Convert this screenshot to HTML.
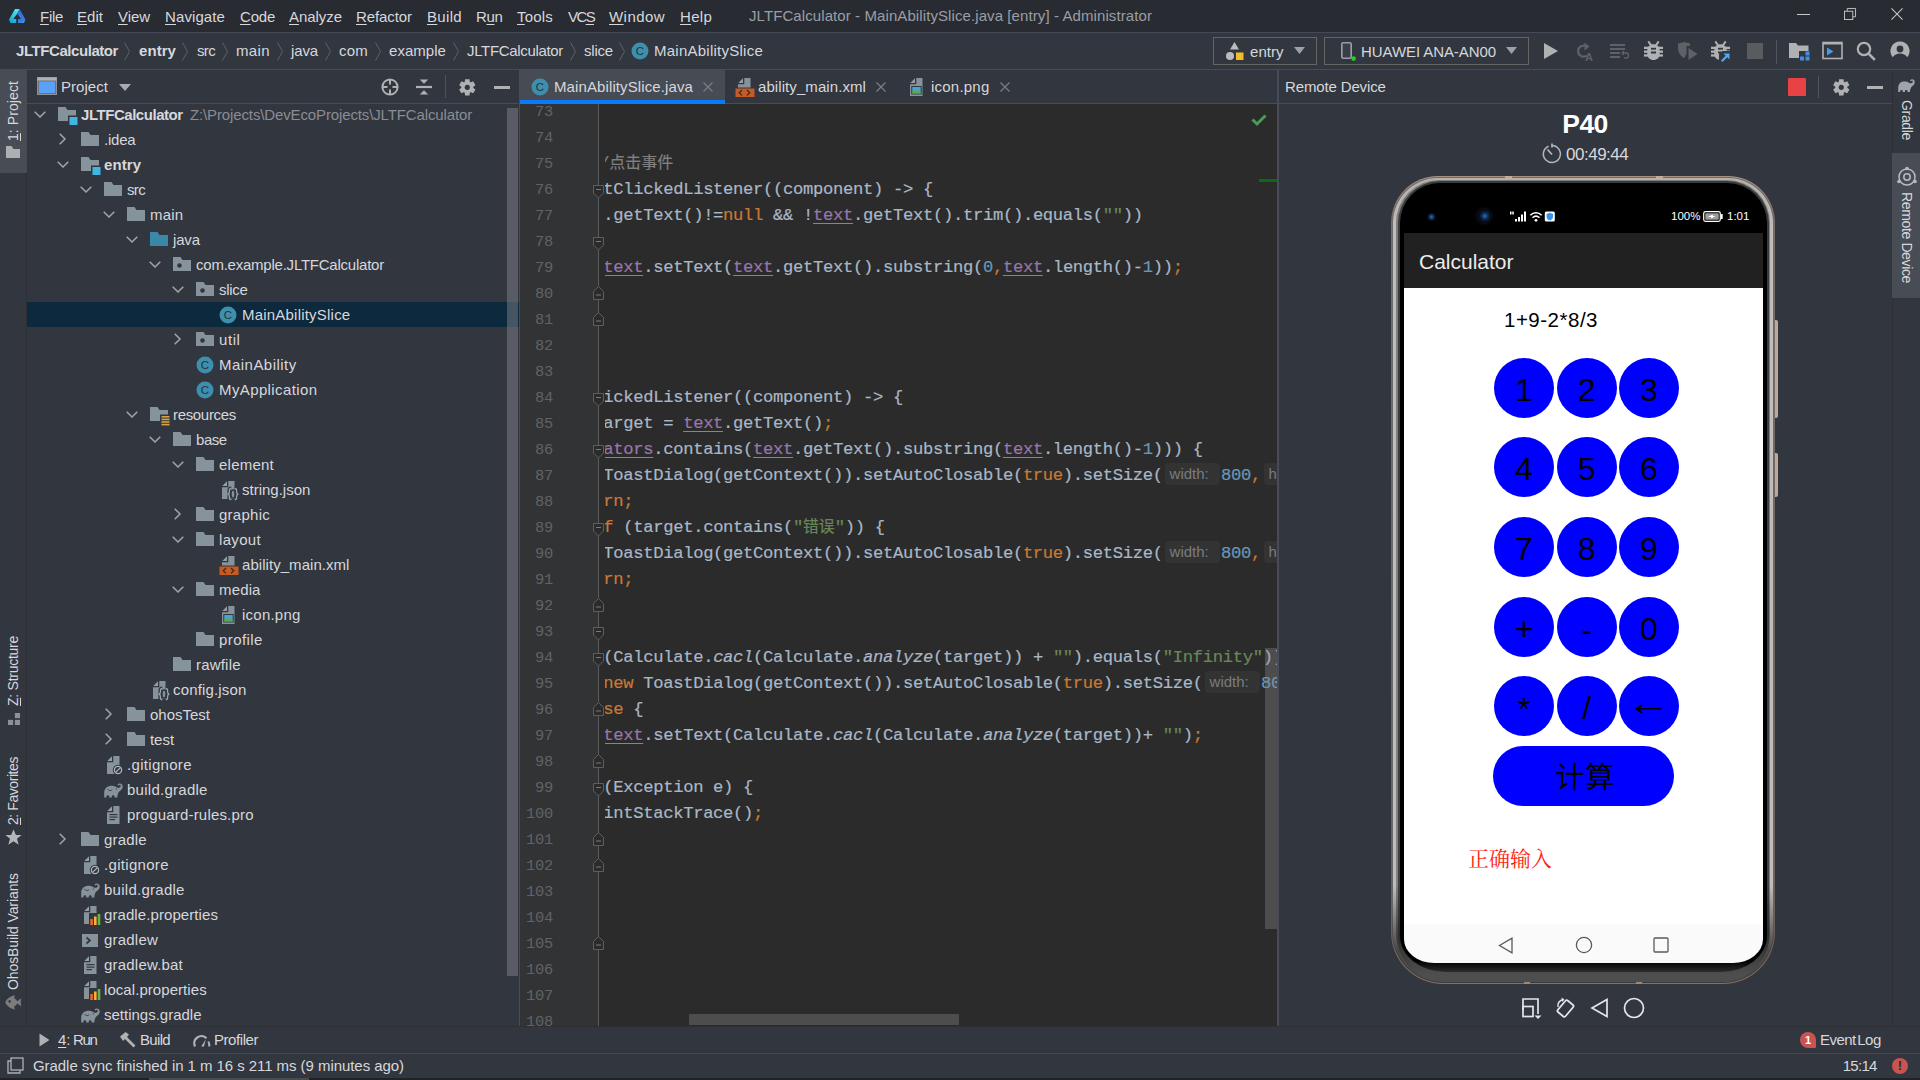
<!DOCTYPE html><html lang="en"><head><meta charset="utf-8"><title>JLTFCalculator - MainAbilitySlice.java</title><style>
*{margin:0;padding:0;box-sizing:border-box}
html,body{width:1920px;height:1080px;overflow:hidden;background:#32363f;}
body{position:relative;font-family:"Liberation Sans","Noto Sans CJK SC",sans-serif;font-size:15px;color:#d6d8dc;}
.a{position:absolute}
.t{position:absolute;white-space:pre;line-height:20px;height:20px}
.b{font-weight:bold}
u.m{text-decoration:underline;text-underline-offset:2px}
svg{position:absolute;overflow:visible}
.code{position:absolute;left:-1.8px;white-space:pre;font-family:"Liberation Mono","Noto Sans CJK SC",monospace;font-size:17.2px;letter-spacing:-0.322px;line-height:26px;height:26px;color:#a9b7c6;-webkit-text-stroke:0.2px}
.ln{position:absolute;right:0;font-family:"Liberation Mono","Noto Sans CJK SC",monospace;font-size:15.4px;letter-spacing:-0.24px;line-height:26px;height:26px;color:#606366;text-align:right}
.k{color:#cc7832} .s{color:#6a8759} .n{color:#6897bb} .f{color:#9876aa;text-decoration:underline;text-underline-offset:3px} .i{font-style:italic} .c{color:#808080}
.hint{display:inline-block;font-family:"Liberation Sans","Noto Sans CJK SC",sans-serif;font-size:15px;letter-spacing:0;-webkit-text-stroke:0;color:#7a7c7f;background:#333333;border-radius:4px;height:22px;line-height:22px;padding:0 5px;vertical-align:top;margin:0 1px 0 1px;overflow:hidden}
</style></head><body>
<div class="a" style="left:0px;top:0px;width:1920px;height:32px;background:#282b32;"></div>
<div class="a" style="left:0px;top:32px;width:1920px;height:1px;background:#454a56;"></div>
<div class="a" style="left:0px;top:69px;width:1920px;height:1px;background:#474c58;"></div>
<svg style="left:8.800px;top:8.800px" width="17" height="15" viewBox="0 0 17 15"><defs><linearGradient id="lg1" x1="0.600" y1="0" x2="0.200" y2="1"><stop offset="0" stop-color="#4fe6ee"/><stop offset="1" stop-color="#18a0d6"/></linearGradient><linearGradient id="lg2" x1="0.300" y1="0" x2="0.600" y2="1"><stop offset="0" stop-color="#2f6fd8"/><stop offset="0.800" stop-color="#3d78e0"/><stop offset="1" stop-color="#2f9be8"/></linearGradient></defs><path d="M6 0H10.600L8.200 4.800L4.300 9.900H7.200V14H1.400L0 10.600Z" fill="url(#lg1)"/><path d="M10.600 0L16.400 10.600L15 14H8.900V9.900H12L8.200 4.800Z" fill="url(#lg2)"/></svg>
<div class="t " style="left:40px;top:7px;letter-spacing:-0.293px;"><u class="m">F</u>ile</div>
<div class="t " style="left:77px;top:7px;letter-spacing:0.038px;"><u class="m">E</u>dit</div>
<div class="t " style="left:118px;top:7px;letter-spacing:-0.06px;"><u class="m">V</u>iew</div>
<div class="t " style="left:165px;top:7px;letter-spacing:0.1px;"><u class="m">N</u>avigate</div>
<div class="t " style="left:240px;top:7px;letter-spacing:-0.215px;"><u class="m">C</u>ode</div>
<div class="t " style="left:289px;top:7px;letter-spacing:-0.052px;"><u class="m">A</u>nalyze</div>
<div class="t " style="left:356px;top:7px;letter-spacing:-0.086px;"><u class="m">R</u>efactor</div>
<div class="t " style="left:427px;top:7px;letter-spacing:0.329px;"><u class="m">B</u>uild</div>
<div class="t " style="left:476px;top:7px;letter-spacing:-0.339px;">R<u class="m">u</u>n</div>
<div class="t " style="left:517px;top:7px;letter-spacing:0.197px;"><u class="m">T</u>ools</div>
<div class="t " style="left:568px;top:7px;letter-spacing:-1.614px;">VC<u class="m">S</u></div>
<div class="t " style="left:609px;top:7px;letter-spacing:0.442px;"><u class="m">W</u>indow</div>
<div class="t " style="left:680px;top:7px;letter-spacing:0.288px;"><u class="m">H</u>elp</div>
<div class="t " style="left:749px;top:6px;letter-spacing:0.091px;color:#9b9ea4">JLTFCalculator - MainAbilitySlice.java [entry] - Administrator</div>
<div class="a" style="left:1797px;top:14px;width:13px;height:1px;background:#c8c9cc;"></div>
<svg style="left:1844px;top:8px" width="12" height="12" viewBox="0 0 13 13" fill="none" stroke="#c8c9cc" stroke-width="1"><rect x="0.5" y="3.5" width="9" height="9"/><path d="M3.5 3.5V0.5H12.5V9.5H9.5"/></svg>
<svg style="left:1891px;top:8px" width="12" height="12" viewBox="0 0 14 14" fill="none" stroke="#c8c9cc" stroke-width="1.2"><path d="M0.5 0.5L13.5 13.5M13.5 0.5L0.5 13.5"/></svg>
<div class="t b" style="left:16px;top:41px;letter-spacing:-0.434px;">JLTFCalculator</div>
<div class="t b" style="left:139px;top:41px;letter-spacing:0.064px;">entry</div>
<div class="t " style="left:197px;top:41px;letter-spacing:-0.665px;">src</div>
<div class="t " style="left:236px;top:41px;letter-spacing:0.372px;">main</div>
<div class="t " style="left:291px;top:41px;letter-spacing:-0.129px;">java</div>
<div class="t " style="left:339px;top:41px;letter-spacing:0.221px;">com</div>
<div class="t " style="left:389px;top:41px;letter-spacing:0.043px;">example</div>
<div class="t " style="left:467px;top:41px;letter-spacing:-0.327px;">JLTFCalculator</div>
<div class="t " style="left:584px;top:41px;letter-spacing:-0.202px;">slice</div>
<svg style="left:123px;top:42px" width="8" height="19" viewBox="0 0 8 19" fill="none" stroke="#5d616a" stroke-width="1"><path d="M1.5 0.5L6.5 9.5L1.5 18.5"/></svg>
<svg style="left:181px;top:42px" width="8" height="19" viewBox="0 0 8 19" fill="none" stroke="#5d616a" stroke-width="1"><path d="M1.5 0.5L6.5 9.5L1.5 18.5"/></svg>
<svg style="left:221px;top:42px" width="8" height="19" viewBox="0 0 8 19" fill="none" stroke="#5d616a" stroke-width="1"><path d="M1.5 0.5L6.5 9.5L1.5 18.5"/></svg>
<svg style="left:276px;top:42px" width="8" height="19" viewBox="0 0 8 19" fill="none" stroke="#5d616a" stroke-width="1"><path d="M1.5 0.5L6.5 9.5L1.5 18.5"/></svg>
<svg style="left:324px;top:42px" width="8" height="19" viewBox="0 0 8 19" fill="none" stroke="#5d616a" stroke-width="1"><path d="M1.5 0.5L6.5 9.5L1.5 18.5"/></svg>
<svg style="left:374px;top:42px" width="8" height="19" viewBox="0 0 8 19" fill="none" stroke="#5d616a" stroke-width="1"><path d="M1.5 0.5L6.5 9.5L1.5 18.5"/></svg>
<svg style="left:452px;top:42px" width="8" height="19" viewBox="0 0 8 19" fill="none" stroke="#5d616a" stroke-width="1"><path d="M1.5 0.5L6.5 9.5L1.5 18.5"/></svg>
<svg style="left:569px;top:42px" width="8" height="19" viewBox="0 0 8 19" fill="none" stroke="#5d616a" stroke-width="1"><path d="M1.5 0.5L6.5 9.5L1.5 18.5"/></svg>
<svg style="left:618px;top:42px" width="8" height="19" viewBox="0 0 8 19" fill="none" stroke="#5d616a" stroke-width="1"><path d="M1.5 0.5L6.5 9.5L1.5 18.5"/></svg>
<svg style="left:631px;top:42px" width="18" height="18" viewBox="0 0 18 18"><circle cx="9" cy="9" r="8.5" fill="#3d8fad"/><text x="9" y="13.2" text-anchor="middle" font-family="Liberation Sans,sans-serif" font-size="11.5" fill="#26323b">C</text></svg>
<div class="t " style="left:654px;top:41px;letter-spacing:0.248px;">MainAbilitySlice</div>
<div class="a" style="left:1213px;top:37px;width:104px;height:28px;border:1px solid #646464"></div>
<div class="a" style="left:1324px;top:37px;width:205px;height:28px;border:1px solid #646464"></div>
<svg style="left:1225px;top:41px" width="20" height="20" viewBox="0 0 20 20"><path d="M9.5 1L14 8.5H5Z" fill="#b9bbbe"/><circle cx="5" cy="15" r="4" fill="#b9bbbe"/><rect x="11" y="11.5" width="7.5" height="7.5" fill="#f2bd2b"/></svg>
<div class="t " style="left:1250px;top:42px;letter-spacing:0.051px;">entry</div>
<svg style="left:1294px;top:47px" width="11" height="7" viewBox="0 0 11 7"><path d="M0 0H11L5.5 7Z" fill="#9da0a6"/></svg>
<svg style="left:1340px;top:41px" width="16" height="20" viewBox="0 0 16 20"><rect x="1.8" y="1.8" width="9.4" height="15.4" rx="1.5" fill="#3a3e47" stroke="#9aa0a8" stroke-width="1.6"/><circle cx="13.6" cy="17.6" r="2.3" fill="#1fd41f"/></svg>
<div class="t " style="left:1361px;top:42px;letter-spacing:-0.076px;">HUAWEI ANA-AN00</div>
<svg style="left:1506px;top:47px" width="11" height="7" viewBox="0 0 11 7"><path d="M0 0H11L5.5 7Z" fill="#9da0a6"/></svg>
<svg style="left:1543px;top:42px" width="16" height="18" viewBox="0 0 16 18"><path d="M1 1L15 9L1 17Z" fill="#afb1b3"/></svg>
<svg style="left:1575px;top:41px" width="20" height="20" viewBox="0 0 20 20" fill="none" stroke="#5e6166" stroke-width="2.2"><path d="M12 14.5A5.5 5.5 0 1 1 10.5 5"/><path d="M9.5 1.5L14.5 5.5L9.5 9.5Z" fill="#5e6166" stroke="none"/><text x="10" y="19.500" font-size="11" font-weight="bold" font-family="Liberation Sans,sans-serif" fill="#5e6166" stroke="none">A</text></svg>
<svg style="left:1610px;top:43px" width="20" height="17" viewBox="0 0 20 17" fill="#5e6166"><rect x="0" y="1" width="15" height="2"/><rect x="0" y="5" width="15" height="2"/><rect x="0" y="9" width="10" height="2"/><rect x="0" y="13" width="10" height="2"/><path d="M12 10h4a2.5 2.5 0 0 1 0 5h-2" fill="none" stroke="#5e6166" stroke-width="1.3"/><path d="M14 7.5L11 10L14 12.5Z"/></svg>
<svg style="left:1644px;top:41px" width="19" height="19" viewBox="0 0 19 19" fill="#afb1b3"><path d="M4.300 0.400L7.200 4.600M14.700 0.400L11.800 4.600" stroke="#afb1b3" stroke-width="1.900" fill="none"/><path d="M9.500 3.200c3.600 0 6.200 2.400 6.200 6v4c0 3.400-2.800 5.800-6.200 5.800s-6.200-2.400-6.200-5.800v-4c0-3.600 2.600-6 6.200-6z"/><rect x="0" y="5.700" width="19" height="2.300"/><rect x="0" y="9.500" width="19" height="2.300"/><rect x="0" y="13.300" width="19" height="2.300"/><rect x="7" y="6.800" width="5" height="1.800" fill="#32363f"/><rect x="7" y="10.500" width="5" height="2" fill="#32363f"/></svg>
<svg style="left:1677px;top:41px" width="22" height="20" viewBox="0 0 22 20" fill="#5e6166"><path d="M1 2.500L7.500 1L13 2.500V5H9.500V12.500L7.500 17C3.500 15 1 11.500 1 7Z"/><path d="M11.500 7L20.500 13L11.500 19Z"/></svg>
<svg style="left:1711px;top:41px" width="19" height="19" viewBox="0 0 19 19" fill="#afb1b3"><path d="M4.300 0.400L7.200 4.600M14.700 0.400L11.800 4.600" stroke="#afb1b3" stroke-width="1.900" fill="none"/><path d="M9.500 3.200c3.600 0 6.200 2.400 6.200 6v4c0 3.400-2.800 5.800-6.200 5.800s-6.200-2.400-6.200-5.800v-4c0-3.600 2.600-6 6.200-6z"/><rect x="0" y="5.700" width="19" height="2.300"/><rect x="0" y="9.500" width="19" height="2.300"/><rect x="0" y="13.300" width="19" height="2.300"/><rect x="7" y="6.800" width="5" height="1.800" fill="#32363f"/><rect x="7" y="10.500" width="5" height="2" fill="#32363f"/></svg>
<svg style="left:1719px;top:51px" width="12" height="12" viewBox="0 0 12 12"><path d="M0 12V3L4 0H12V12Z" fill="#32363f"/><path d="M4.500 2.500H10.500V8.500L8.300 6.300L3.600 11L2 9.400L6.700 4.700Z" fill="#4aa8ff"/></svg>
<div class="a" style="left:1747px;top:43px;width:16px;height:16px;background:#595b5f;"></div>
<div class="a" style="left:1776px;top:40px;width:1px;height:24px;background:#50545c;"></div>
<svg style="left:1788px;top:41px" width="22" height="20" viewBox="0 0 22 20"><path d="M1 2H8L10 4.500H20.500V17H1Z" fill="#afb1b3"/><rect x="11" y="10" width="11" height="10" fill="#32363f"/><rect x="12" y="15.500" width="4" height="4" fill="#3d8fe8"/><rect x="17.500" y="15.500" width="4" height="4" fill="#3d8fe8"/><rect x="17.500" y="10.500" width="4" height="4" fill="#3d8fe8"/></svg>
<svg style="left:1822px;top:41px" width="21" height="19" viewBox="0 0 21 19"><rect x="1" y="1.500" width="19" height="16" fill="none" stroke="#afb1b3" stroke-width="1.600"/><rect x="1" y="1" width="19" height="2.500" fill="#afb1b3"/><path d="M5 6.500L11.500 10.500L5 14.500Z" fill="#3d9cf0"/></svg>
<svg style="left:1856px;top:41px" width="20" height="20" viewBox="0 0 20 20" fill="none" stroke="#afb1b3" stroke-width="2.200"><circle cx="8" cy="8" r="6.200"/><path d="M12.600 12.600L18.800 18.800" stroke-width="2.600"/></svg>
<svg style="left:1890px;top:41px" width="20" height="20" viewBox="0 0 20 20"><path d="M10 0.500A9.500 9.500 0 0 1 17.200 16.200C15.600 13.800 13 12.600 10 12.600S4.400 13.800 2.800 16.200A9.500 9.500 0 0 1 10 0.500Z" fill="#afb1b3"/><circle cx="10" cy="8" r="3.400" fill="#32363f"/></svg>
<div class="a" style="left:26px;top:70px;width:1px;height:957px;background:#2d2f34;"></div>
<div class="a" style="left:0px;top:70px;width:27px;height:103px;background:#484c55;"></div>
<div class="t" style="left:13px;top:140.5px;transform-origin:0 0;transform:rotate(-90deg) translate(0,-10px);font-size:14px;letter-spacing:0.086px;"><u class="m">1</u>: Project</div>
<div class="t" style="left:13px;top:706px;transform-origin:0 0;transform:rotate(-90deg) translate(0,-10px);font-size:14px;letter-spacing:-0.261px;"><u class="m">Z</u>: Structure</div>
<div class="t" style="left:13px;top:825px;transform-origin:0 0;transform:rotate(-90deg) translate(0,-10px);font-size:14px;letter-spacing:-0.428px;"><u class="m">2</u>: Favorites</div>
<div class="t" style="left:13px;top:990px;transform-origin:0 0;transform:rotate(-90deg) translate(0,-10px);font-size:14px;letter-spacing:-0.1px;">OhosBuild Variants</div>
<svg style="left:6px;top:146px" width="14" height="12" viewBox="0 0 14 12"><path d="M0 0H5.500L7.500 3H14V12H0Z" fill="#adafb2"/></svg>
<svg style="left:7.500px;top:712.500px" width="12" height="12" viewBox="0 0 14 14" fill="#8d9095"><rect x="8" y="0" width="6" height="6"/><rect x="0" y="8" width="6" height="6"/><rect x="8" y="8" width="6" height="6"/></svg>
<svg style="left:5px;top:829px" width="17" height="17" viewBox="0 0 17 17"><path d="M8.500 0.500L10.900 6H16.500L12 9.700L13.700 15.800L8.500 12.200L3.300 15.800L5 9.700L0.500 6H6.100Z" fill="#b4b6b9"/></svg>
<svg style="left:4.500px;top:994.500px" width="17" height="15" viewBox="0 0 17 15"><path d="M0.300 7C2 3.500 5 1 9.800 0.200L9.200 3.200C10.600 4 11.600 5 12.300 6.200L16.300 3.200C15.600 5.800 15.600 9 16.300 11.600L12.300 8.600C11.600 9.800 10.600 10.800 9.200 11.600L9.800 14.600C5 13.800 2 11 0.300 7.800Z" fill="#7c7c7c"/><ellipse cx="4.600" cy="6.500" rx="1.100" ry="1.400" fill="#32363f"/></svg>
<svg style="left:37px;top:77px" width="20" height="18" viewBox="0 0 20 18"><rect x="0.500" y="0.500" width="19" height="17" fill="#6e7279" stroke="#8d9096"/><rect x="0.500" y="0.500" width="19" height="3" fill="#aeb0b4"/><rect x="2" y="4.500" width="16" height="11.500" fill="#5aa2f7"/></svg>
<div class="t " style="left:61px;top:77px;letter-spacing:0.045px;">Project</div>
<svg style="left:119px;top:84px" width="12" height="7" viewBox="0 0 12 7"><path d="M0 0H12L6 7Z" fill="#a9abaf"/></svg>
<svg style="left:381px;top:78px" width="18" height="18" viewBox="0 0 18 18" fill="none" stroke="#afb1b3" stroke-width="2"><circle cx="9" cy="9" r="7.600"/><path d="M9 1V6.500M9 11.500V17M1 9H6.500M11.500 9H17" stroke-width="2"/></svg>
<svg style="left:416px;top:78px" width="16" height="18" viewBox="0 0 16 18" fill="#afb1b3"><rect x="0" y="7.900" width="16" height="2.200"/><path d="M8 5.800L3.800 1.400H12.200Z"/><path d="M8 12.200L3.800 16.600H12.200Z"/></svg>
<div class="a" style="left:445px;top:75px;width:1px;height:23px;background:#55524e;"></div>
<svg style="left:458.7px;top:78.7px" width="16.600" height="16.600" viewBox="-9 -9 18 18"><g fill="#afb1b3"><path d="M-2.400 -8.800H2.400L3 -4H-3Z" transform="rotate(0)"/><path d="M-2.400 -8.800H2.400L3 -4H-3Z" transform="rotate(60)"/><path d="M-2.400 -8.800H2.400L3 -4H-3Z" transform="rotate(120)"/><path d="M-2.400 -8.800H2.400L3 -4H-3Z" transform="rotate(180)"/><path d="M-2.400 -8.800H2.400L3 -4H-3Z" transform="rotate(240)"/><path d="M-2.400 -8.800H2.400L3 -4H-3Z" transform="rotate(300)"/><circle r="6.400"/></g><circle r="2.800" fill="#32363f"/></svg>
<div class="a" style="left:494px;top:86px;width:16px;height:2.5px;background:#afb1b3;"></div>
<div class="a" style="left:27px;top:103px;width:492px;height:1px;background:#474c58;"></div>
<svg style="left:34px;top:111px" width="12" height="7" viewBox="0 0 12 7" fill="none" stroke="#a2a5ab" stroke-width="1.500"><path d="M0.700 0.700L6 6L11.300 0.700"/></svg>
<svg style="left:58px;top:107px" width="20" height="19" viewBox="0 0 20 19"><path d="M0 0H7.500L9.500 3H18V14H0Z" fill="#87939a"/><rect x="10" y="8.500" width="10" height="10" fill="#32363f"/><rect x="11.500" y="10" width="8" height="8" fill="#40b6e0"/></svg>
<div class="t b" style="left:81px;top:105px;letter-spacing:-0.455px;">JLTFCalculator</div>
<svg style="left:59px;top:133px" width="7" height="12" viewBox="0 0 7 12" fill="none" stroke="#a2a5ab" stroke-width="1.500"><path d="M0.700 0.700L6 6L0.700 11.300"/></svg>
<svg style="left:81px;top:132px" width="20" height="19" viewBox="0 0 20 19"><path d="M0 0H7.500L9.500 3H18V14H0Z" fill="#87939a"/></svg>
<div class="t " style="left:104px;top:130px;letter-spacing:-0.225px;">.idea</div>
<svg style="left:57px;top:161px" width="12" height="7" viewBox="0 0 12 7" fill="none" stroke="#a2a5ab" stroke-width="1.500"><path d="M0.700 0.700L6 6L11.300 0.700"/></svg>
<svg style="left:81px;top:157px" width="20" height="19" viewBox="0 0 20 19"><path d="M0 0H7.500L9.500 3H18V14H0Z" fill="#87939a"/><rect x="10" y="8.500" width="10" height="10" fill="#32363f"/><rect x="11.500" y="10" width="8" height="8" fill="#40b6e0"/></svg>
<div class="t b" style="left:104px;top:155px;letter-spacing:0.124px;">entry</div>
<svg style="left:80px;top:186px" width="12" height="7" viewBox="0 0 12 7" fill="none" stroke="#a2a5ab" stroke-width="1.500"><path d="M0.700 0.700L6 6L11.300 0.700"/></svg>
<svg style="left:104px;top:182px" width="20" height="19" viewBox="0 0 20 19"><path d="M0 0H7.500L9.500 3H18V14H0Z" fill="#87939a"/></svg>
<div class="t " style="left:127px;top:180px;letter-spacing:-0.665px;">src</div>
<svg style="left:103px;top:211px" width="12" height="7" viewBox="0 0 12 7" fill="none" stroke="#a2a5ab" stroke-width="1.500"><path d="M0.700 0.700L6 6L11.300 0.700"/></svg>
<svg style="left:127px;top:207px" width="20" height="19" viewBox="0 0 20 19"><path d="M0 0H7.500L9.500 3H18V14H0Z" fill="#87939a"/></svg>
<div class="t " style="left:150px;top:205px;letter-spacing:0.197px;">main</div>
<svg style="left:126px;top:236px" width="12" height="7" viewBox="0 0 12 7" fill="none" stroke="#a2a5ab" stroke-width="1.500"><path d="M0.700 0.700L6 6L11.300 0.700"/></svg>
<svg style="left:150px;top:232px" width="20" height="19" viewBox="0 0 20 19"><path d="M0 0H7.500L9.500 3H18V14H0Z" fill="#3a87a8"/></svg>
<div class="t " style="left:173px;top:230px;letter-spacing:-0.154px;">java</div>
<svg style="left:149px;top:261px" width="12" height="7" viewBox="0 0 12 7" fill="none" stroke="#a2a5ab" stroke-width="1.500"><path d="M0.700 0.700L6 6L11.300 0.700"/></svg>
<svg style="left:173px;top:257px" width="20" height="19" viewBox="0 0 20 19"><path d="M0 0H7.500L9.500 3H18V14H0Z" fill="#87939a"/><circle cx="6.500" cy="8.500" r="2.300" fill="#32363f"/></svg>
<div class="t " style="left:196px;top:255px;letter-spacing:-0.229px;">com.example.JLTFCalculator</div>
<svg style="left:172px;top:286px" width="12" height="7" viewBox="0 0 12 7" fill="none" stroke="#a2a5ab" stroke-width="1.500"><path d="M0.700 0.700L6 6L11.300 0.700"/></svg>
<svg style="left:196px;top:282px" width="20" height="19" viewBox="0 0 20 19"><path d="M0 0H7.500L9.500 3H18V14H0Z" fill="#87939a"/><circle cx="6.500" cy="8.500" r="2.300" fill="#32363f"/></svg>
<div class="t " style="left:219px;top:280px;letter-spacing:-0.302px;">slice</div>
<div class="a" style="left:27px;top:302px;width:492px;height:25px;background:#0d293e;"></div>
<svg style="left:219px;top:306px" width="18" height="18" viewBox="0 0 18 18"><circle cx="9" cy="9" r="8.5" fill="#3d8fad"/><text x="9" y="13.2" text-anchor="middle" font-family="Liberation Sans,sans-serif" font-size="11.5" fill="#26323b">C</text></svg>
<div class="t " style="left:242px;top:305px;letter-spacing:0.21px;">MainAbilitySlice</div>
<svg style="left:174px;top:333px" width="7" height="12" viewBox="0 0 7 12" fill="none" stroke="#a2a5ab" stroke-width="1.500"><path d="M0.700 0.700L6 6L0.700 11.300"/></svg>
<svg style="left:196px;top:332px" width="20" height="19" viewBox="0 0 20 19"><path d="M0 0H7.500L9.500 3H18V14H0Z" fill="#87939a"/><circle cx="6.500" cy="8.500" r="2.300" fill="#32363f"/></svg>
<div class="t " style="left:219px;top:330px;letter-spacing:0.581px;">util</div>
<svg style="left:196px;top:356px" width="18" height="18" viewBox="0 0 18 18"><circle cx="9" cy="9" r="8.5" fill="#3d8fad"/><text x="9" y="13.2" text-anchor="middle" font-family="Liberation Sans,sans-serif" font-size="11.5" fill="#26323b">C</text></svg>
<div class="t " style="left:219px;top:355px;letter-spacing:0.47px;">MainAbility</div>
<svg style="left:196px;top:381px" width="18" height="18" viewBox="0 0 18 18"><circle cx="9" cy="9" r="8.5" fill="#3d8fad"/><text x="9" y="13.2" text-anchor="middle" font-family="Liberation Sans,sans-serif" font-size="11.5" fill="#26323b">C</text></svg>
<div class="t " style="left:219px;top:380px;letter-spacing:0.386px;">MyApplication</div>
<svg style="left:126px;top:411px" width="12" height="7" viewBox="0 0 12 7" fill="none" stroke="#a2a5ab" stroke-width="1.500"><path d="M0.700 0.700L6 6L11.300 0.700"/></svg>
<svg style="left:150px;top:407px" width="20" height="19" viewBox="0 0 20 19"><path d="M0 0H7.500L9.500 3H18V14H0Z" fill="#87939a"/><rect x="10" y="7.500" width="10" height="11" fill="#32363f"/><g fill="#d9a343"><rect x="11.500" y="9" width="8" height="1.600"/><rect x="11.500" y="11.600" width="8" height="1.600"/><rect x="11.500" y="14.200" width="8" height="1.600"/><rect x="11.500" y="16.800" width="8" height="1.600"/></g></svg>
<div class="t " style="left:173px;top:405px;letter-spacing:-0.329px;">resources</div>
<svg style="left:149px;top:436px" width="12" height="7" viewBox="0 0 12 7" fill="none" stroke="#a2a5ab" stroke-width="1.500"><path d="M0.700 0.700L6 6L11.300 0.700"/></svg>
<svg style="left:173px;top:432px" width="20" height="19" viewBox="0 0 20 19"><path d="M0 0H7.500L9.500 3H18V14H0Z" fill="#87939a"/></svg>
<div class="t " style="left:196px;top:430px;letter-spacing:-0.457px;">base</div>
<svg style="left:172px;top:461px" width="12" height="7" viewBox="0 0 12 7" fill="none" stroke="#a2a5ab" stroke-width="1.500"><path d="M0.700 0.700L6 6L11.300 0.700"/></svg>
<svg style="left:196px;top:457px" width="20" height="19" viewBox="0 0 20 19"><path d="M0 0H7.500L9.500 3H18V14H0Z" fill="#87939a"/></svg>
<div class="t " style="left:219px;top:455px;letter-spacing:0.234px;">element</div>
<svg style="left:221.5px;top:481px" width="18" height="20" viewBox="0 0 18 20"><path d="M6.300 0H12.500V18H0V6.300H6.300Z" fill="#87939a"/><path d="M5 0.300V5H0.300Z" fill="#939ea5"/><path d="M9.300 7.500C7.600 7.500 7.400 8.300 7.400 9.500V11C7.400 12.300 6.800 13 5.600 13.100C6.800 13.200 7.400 13.900 7.400 15.200V16.700C7.400 17.900 7.600 18.700 9.300 18.700M12.700 7.500C14.400 7.500 14.600 8.300 14.600 9.500V11C14.600 12.300 15.200 13 16.400 13.100C15.200 13.200 14.600 13.900 14.600 15.200V16.700C14.600 17.900 14.400 18.700 12.700 18.700" fill="none" stroke="#32363f" stroke-width="4"/><ellipse cx="11" cy="13.100" rx="2.600" ry="4.800" fill="#32363f"/><path d="M9.300 7.500C7.600 7.500 7.400 8.300 7.400 9.500V11C7.400 12.300 6.800 13 5.600 13.100C6.800 13.200 7.400 13.900 7.400 15.200V16.700C7.400 17.900 7.600 18.700 9.300 18.700M12.700 7.500C14.400 7.500 14.600 8.300 14.600 9.500V11C14.600 12.300 15.200 13 16.400 13.100C15.200 13.200 14.600 13.900 14.600 15.200V16.700C14.600 17.900 14.400 18.700 12.700 18.700" fill="none" stroke="#9aa5ac" stroke-width="1.300"/><ellipse cx="11" cy="13.100" rx="1.250" ry="3.300" fill="#87939a"/></svg>
<div class="t " style="left:242px;top:480px;letter-spacing:0.003px;">string.json</div>
<svg style="left:174px;top:508px" width="7" height="12" viewBox="0 0 7 12" fill="none" stroke="#a2a5ab" stroke-width="1.500"><path d="M0.700 0.700L6 6L0.700 11.300"/></svg>
<svg style="left:196px;top:507px" width="20" height="19" viewBox="0 0 20 19"><path d="M0 0H7.500L9.500 3H18V14H0Z" fill="#87939a"/></svg>
<div class="t " style="left:219px;top:505px;letter-spacing:0.258px;">graphic</div>
<svg style="left:172px;top:536px" width="12" height="7" viewBox="0 0 12 7" fill="none" stroke="#a2a5ab" stroke-width="1.500"><path d="M0.700 0.700L6 6L11.300 0.700"/></svg>
<svg style="left:196px;top:532px" width="20" height="19" viewBox="0 0 20 19"><path d="M0 0H7.500L9.500 3H18V14H0Z" fill="#87939a"/></svg>
<div class="t " style="left:219px;top:530px;letter-spacing:0.329px;">layout</div>
<svg style="left:221.5px;top:556px" width="18" height="20" viewBox="0 0 18 20"><path d="M6.300 0H12.500V18H0V6.300H6.300Z" fill="#87939a"/><path d="M5 0.300V5H0.300Z" fill="#939ea5"/><rect x="-3" y="9.500" width="20" height="10" fill="#32363f"/><rect x="-2.500" y="10.500" width="19" height="8.500" fill="#c75b25"/><path d="M4 12L1.200 14.700L4 17.400M9 12L11.800 14.700L9 17.400" fill="none" stroke="#3a2a22" stroke-width="1.300"/></svg>
<div class="t " style="left:242px;top:555px;letter-spacing:0.05px;">ability_main.xml</div>
<svg style="left:172px;top:586px" width="12" height="7" viewBox="0 0 12 7" fill="none" stroke="#a2a5ab" stroke-width="1.500"><path d="M0.700 0.700L6 6L11.300 0.700"/></svg>
<svg style="left:196px;top:582px" width="20" height="19" viewBox="0 0 20 19"><path d="M0 0H7.500L9.500 3H18V14H0Z" fill="#87939a"/></svg>
<div class="t " style="left:219px;top:580px;letter-spacing:0.149px;">media</div>
<svg style="left:221.5px;top:606px" width="18" height="20" viewBox="0 0 18 20"><path d="M6.300 0H12.500V18H0V6.300H6.300Z" fill="#87939a"/><path d="M5 0.300V5H0.300Z" fill="#939ea5"/><rect x="1.300" y="8" width="10.400" height="8.500" fill="#32363f"/><rect x="2.300" y="9" width="8.400" height="6.500" fill="#3fa7d6"/><path d="M2.300 15.500V13.500C4.500 11.500 6.500 11.500 10.700 14.500V15.500Z" fill="#5fa84a"/></svg>
<div class="t " style="left:242px;top:605px;letter-spacing:0.236px;">icon.png</div>
<svg style="left:196px;top:632px" width="20" height="19" viewBox="0 0 20 19"><path d="M0 0H7.500L9.500 3H18V14H0Z" fill="#87939a"/></svg>
<div class="t " style="left:219px;top:630px;letter-spacing:0.406px;">profile</div>
<svg style="left:173px;top:657px" width="20" height="19" viewBox="0 0 20 19"><path d="M0 0H7.500L9.500 3H18V14H0Z" fill="#87939a"/></svg>
<div class="t " style="left:196px;top:655px;letter-spacing:0.194px;">rawfile</div>
<svg style="left:152.5px;top:681px" width="18" height="20" viewBox="0 0 18 20"><path d="M6.300 0H12.500V18H0V6.300H6.300Z" fill="#87939a"/><path d="M5 0.300V5H0.300Z" fill="#939ea5"/><path d="M9.300 7.500C7.600 7.500 7.400 8.300 7.400 9.500V11C7.400 12.300 6.800 13 5.600 13.100C6.800 13.200 7.400 13.900 7.400 15.200V16.700C7.400 17.900 7.600 18.700 9.300 18.700M12.700 7.500C14.400 7.500 14.600 8.300 14.600 9.500V11C14.600 12.300 15.200 13 16.400 13.100C15.200 13.200 14.600 13.900 14.600 15.200V16.700C14.600 17.900 14.400 18.700 12.700 18.700" fill="none" stroke="#32363f" stroke-width="4"/><ellipse cx="11" cy="13.100" rx="2.600" ry="4.800" fill="#32363f"/><path d="M9.300 7.500C7.600 7.500 7.400 8.300 7.400 9.500V11C7.400 12.300 6.800 13 5.600 13.100C6.800 13.200 7.400 13.900 7.400 15.200V16.700C7.400 17.900 7.600 18.700 9.300 18.700M12.700 7.500C14.400 7.500 14.600 8.300 14.600 9.500V11C14.600 12.300 15.200 13 16.400 13.100C15.200 13.200 14.600 13.900 14.600 15.200V16.700C14.600 17.900 14.400 18.700 12.700 18.700" fill="none" stroke="#9aa5ac" stroke-width="1.300"/><ellipse cx="11" cy="13.100" rx="1.250" ry="3.300" fill="#87939a"/></svg>
<div class="t " style="left:173px;top:680px;letter-spacing:0.163px;">config.json</div>
<svg style="left:105px;top:708px" width="7" height="12" viewBox="0 0 7 12" fill="none" stroke="#a2a5ab" stroke-width="1.500"><path d="M0.700 0.700L6 6L0.700 11.300"/></svg>
<svg style="left:127px;top:707px" width="20" height="19" viewBox="0 0 20 19"><path d="M0 0H7.500L9.500 3H18V14H0Z" fill="#87939a"/></svg>
<div class="t " style="left:150px;top:705px;letter-spacing:-0.005px;">ohosTest</div>
<svg style="left:105px;top:733px" width="7" height="12" viewBox="0 0 7 12" fill="none" stroke="#a2a5ab" stroke-width="1.500"><path d="M0.700 0.700L6 6L0.700 11.300"/></svg>
<svg style="left:127px;top:732px" width="20" height="19" viewBox="0 0 20 19"><path d="M0 0H7.500L9.500 3H18V14H0Z" fill="#87939a"/></svg>
<div class="t " style="left:150px;top:730px;letter-spacing:-0.044px;">test</div>
<svg style="left:106.5px;top:756px" width="18" height="20" viewBox="0 0 18 20"><path d="M6.300 0H12.500V18H0V6.300H6.300Z" fill="#87939a"/><path d="M5 0.300V5H0.300Z" fill="#939ea5"/><circle cx="11" cy="14" r="5.200" fill="#32363f"/><circle cx="11" cy="14" r="3.600" fill="none" stroke="#a9b4ba" stroke-width="1.300"/><path d="M8.600 16.400L13.400 11.600" stroke="#a9b4ba" stroke-width="1.300"/></svg>
<div class="t " style="left:127px;top:755px;letter-spacing:0.309px;">.gitignore</div>
<svg style="left:103.7px;top:782.8px" width="19" height="15" viewBox="0 -0.300 19 15"><path d="M0.200 14.300V9.500C0.200 6 2.500 2.800 6 2.600C8.500 2.400 11 2.800 13.300 4.400C14.800 4.900 16.200 4.200 16.600 2.900C16.900 1.900 16 1.300 15.200 1.700C14.600 2 14.300 2.300 13.800 2C13.300 1.500 14 0.300 15.500 0.100C17.300 -0.100 18.600 1.200 18.700 3C18.800 5 17.600 6.800 15.600 8C14.600 9 13.600 10.500 13.300 14.300H10.600V13.200C10.600 12.200 9.900 11.900 9.200 11.900C8.500 11.900 7.800 12.200 7.800 13.200V14.300H5.200V13.200C5.200 12.200 4.500 11.900 3.800 11.900C3.100 11.900 2.400 12.200 2.400 13.200V14.300Z" fill="#87939a"/><path d="M3.600 5.600C4.600 7.600 7 8 8.300 6.300" fill="none" stroke="#32363f" stroke-width="0.800"/><circle cx="12.300" cy="5.600" r="0.550" fill="#32363f"/></svg>
<div class="t " style="left:127px;top:780px;letter-spacing:0.262px;">build.gradle</div>
<svg style="left:106.5px;top:806px" width="18" height="20" viewBox="0 0 18 20"><path d="M6.300 0H12.500V18H0V6.300H6.300Z" fill="#87939a"/><path d="M5 0.300V5H0.300Z" fill="#939ea5"/><g fill="#32363f"><rect x="2.500" y="8" width="8" height="1.200"/><rect x="2.500" y="10.500" width="8" height="1.200"/><rect x="2.500" y="13" width="5.500" height="1.200"/></g></svg>
<div class="t " style="left:127px;top:805px;letter-spacing:0.183px;">proguard-rules.pro</div>
<svg style="left:59px;top:833px" width="7" height="12" viewBox="0 0 7 12" fill="none" stroke="#a2a5ab" stroke-width="1.500"><path d="M0.700 0.700L6 6L0.700 11.300"/></svg>
<svg style="left:81px;top:832px" width="20" height="19" viewBox="0 0 20 19"><path d="M0 0H7.500L9.500 3H18V14H0Z" fill="#87939a"/></svg>
<div class="t " style="left:104px;top:830px;letter-spacing:0.184px;">gradle</div>
<svg style="left:83.5px;top:856px" width="18" height="20" viewBox="0 0 18 20"><path d="M6.300 0H12.500V18H0V6.300H6.300Z" fill="#87939a"/><path d="M5 0.300V5H0.300Z" fill="#939ea5"/><circle cx="11" cy="14" r="5.200" fill="#32363f"/><circle cx="11" cy="14" r="3.600" fill="none" stroke="#a9b4ba" stroke-width="1.300"/><path d="M8.600 16.400L13.400 11.600" stroke="#a9b4ba" stroke-width="1.300"/></svg>
<div class="t " style="left:104px;top:855px;letter-spacing:0.309px;">.gitignore</div>
<svg style="left:80.7px;top:882.8px" width="19" height="15" viewBox="0 -0.300 19 15"><path d="M0.200 14.300V9.500C0.200 6 2.500 2.800 6 2.600C8.500 2.400 11 2.800 13.300 4.400C14.800 4.900 16.200 4.200 16.600 2.900C16.900 1.900 16 1.300 15.200 1.700C14.600 2 14.300 2.300 13.800 2C13.300 1.500 14 0.300 15.500 0.100C17.300 -0.100 18.600 1.200 18.700 3C18.800 5 17.600 6.800 15.600 8C14.600 9 13.600 10.500 13.300 14.300H10.600V13.200C10.600 12.200 9.900 11.900 9.200 11.900C8.500 11.900 7.800 12.200 7.800 13.200V14.300H5.200V13.200C5.200 12.200 4.500 11.900 3.800 11.900C3.100 11.900 2.400 12.200 2.400 13.200V14.300Z" fill="#87939a"/><path d="M3.600 5.600C4.600 7.600 7 8 8.300 6.300" fill="none" stroke="#32363f" stroke-width="0.800"/><circle cx="12.300" cy="5.600" r="0.550" fill="#32363f"/></svg>
<div class="t " style="left:104px;top:880px;letter-spacing:0.262px;">build.gradle</div>
<svg style="left:83.5px;top:906px" width="18" height="20" viewBox="0 0 18 20"><path d="M6.300 0H12.500V18H0V6.300H6.300Z" fill="#87939a"/><path d="M5 0.300V5H0.300Z" fill="#939ea5"/><rect x="5" y="7" width="13" height="12" fill="#32363f"/><rect x="6.300" y="13" width="2.600" height="6" fill="#f26522"/><rect x="10" y="10.500" width="2.600" height="8.500" fill="#fbb03b"/><rect x="13.700" y="8" width="2.600" height="11" fill="#62b543"/></svg>
<div class="t " style="left:104px;top:905px;letter-spacing:0.084px;">gradle.properties</div>
<svg style="left:82px;top:934px" width="16" height="13" viewBox="0 0 16 13"><rect width="16" height="13" fill="#87939a"/><path d="M4.500 3.500L8 6.500L4.500 9.500" fill="none" stroke="#32363f" stroke-width="1.700"/></svg>
<div class="t " style="left:104px;top:930px;letter-spacing:0.21px;">gradlew</div>
<svg style="left:83.5px;top:956px" width="18" height="20" viewBox="0 0 18 20"><path d="M6.300 0H12.500V18H0V6.300H6.300Z" fill="#87939a"/><path d="M5 0.300V5H0.300Z" fill="#939ea5"/><g fill="#32363f"><rect x="2.500" y="8" width="8" height="1.200"/><rect x="2.500" y="10.500" width="8" height="1.200"/><rect x="2.500" y="13" width="5.500" height="1.200"/></g></svg>
<div class="t " style="left:104px;top:955px;letter-spacing:0.207px;">gradlew.bat</div>
<svg style="left:83.5px;top:981px" width="18" height="20" viewBox="0 0 18 20"><path d="M6.300 0H12.500V18H0V6.300H6.300Z" fill="#87939a"/><path d="M5 0.300V5H0.300Z" fill="#939ea5"/><rect x="5" y="7" width="13" height="12" fill="#32363f"/><rect x="6.300" y="13" width="2.600" height="6" fill="#f26522"/><rect x="10" y="10.500" width="2.600" height="8.500" fill="#fbb03b"/><rect x="13.700" y="8" width="2.600" height="11" fill="#62b543"/></svg>
<div class="t " style="left:104px;top:980px;letter-spacing:0.061px;">local.properties</div>
<svg style="left:80.7px;top:1007.8px" width="19" height="15" viewBox="0 -0.300 19 15"><path d="M0.200 14.300V9.500C0.200 6 2.500 2.800 6 2.600C8.500 2.400 11 2.800 13.300 4.400C14.800 4.900 16.200 4.200 16.600 2.900C16.900 1.900 16 1.300 15.200 1.700C14.600 2 14.300 2.300 13.800 2C13.300 1.500 14 0.300 15.500 0.100C17.300 -0.100 18.600 1.200 18.700 3C18.800 5 17.600 6.800 15.600 8C14.600 9 13.600 10.500 13.300 14.300H10.600V13.200C10.600 12.200 9.900 11.900 9.200 11.900C8.500 11.900 7.800 12.200 7.800 13.200V14.300H5.200V13.200C5.200 12.200 4.500 11.900 3.800 11.900C3.100 11.900 2.400 12.200 2.400 13.200V14.300Z" fill="#87939a"/><path d="M3.600 5.600C4.600 7.600 7 8 8.300 6.300" fill="none" stroke="#32363f" stroke-width="0.800"/><circle cx="12.300" cy="5.600" r="0.550" fill="#32363f"/></svg>
<div class="t " style="left:104px;top:1005px;letter-spacing:-0.004px;">settings.gradle</div>
<div class="t " style="left:190px;top:105px;letter-spacing:-0.129px;color:#8a8d93">Z:\Projects\DevEcoProjects\JLTFCalculator</div>
<div class="a" style="left:507px;top:108px;width:11px;height:868px;background:rgba(128,130,138,0.5);"></div>
<div class="a" style="left:519px;top:70px;width:1px;height:957px;background:#474c58;"></div>
<div class="a" style="left:520px;top:70px;width:205px;height:34px;background:#474b54;"></div>
<div class="a" style="left:520px;top:100px;width:205px;height:4px;background:#0a7aff;"></div>
<div class="a" style="left:725px;top:103px;width:553px;height:1px;background:#474c58;"></div>
<svg style="left:531px;top:78px" width="18" height="18" viewBox="0 0 18 18"><circle cx="9" cy="9" r="8.5" fill="#3d8fad"/><text x="9" y="13.2" text-anchor="middle" font-family="Liberation Sans,sans-serif" font-size="11.5" fill="#26323b">C</text></svg>
<div class="t " style="left:554px;top:77px;letter-spacing:0.108px;">MainAbilitySlice.java</div>
<svg style="left:703px;top:82px" width="10" height="10" viewBox="0 0 10 10" fill="none" stroke="#7b7e85" stroke-width="1.200"><path d="M0.500 0.500L9.500 9.500M9.500 0.500L0.500 9.500"/></svg>
<svg style="left:738.0px;top:78px" width="18" height="20" viewBox="0 0 18 20"><path d="M6.300 0H12.500V18H0V6.300H6.300Z" fill="#87939a"/><path d="M5 0.300V5H0.300Z" fill="#939ea5"/><rect x="-3" y="9.500" width="20" height="10" fill="#32363f"/><rect x="-2.500" y="10.500" width="19" height="8.500" fill="#c75b25"/><path d="M4 12L1.200 14.700L4 17.400M9 12L11.800 14.700L9 17.400" fill="none" stroke="#3a2a22" stroke-width="1.300"/></svg>
<div class="t " style="left:758px;top:77px;letter-spacing:0.081px;">ability_main.xml</div>
<svg style="left:876px;top:82px" width="10" height="10" viewBox="0 0 10 10" fill="none" stroke="#7b7e85" stroke-width="1.200"><path d="M0.500 0.500L9.500 9.500M9.500 0.500L0.500 9.500"/></svg>
<svg style="left:910.0px;top:78px" width="18" height="20" viewBox="0 0 18 20"><path d="M6.300 0H12.500V18H0V6.300H6.300Z" fill="#87939a"/><path d="M5 0.300V5H0.300Z" fill="#939ea5"/><rect x="1.300" y="8" width="10.400" height="8.500" fill="#32363f"/><rect x="2.300" y="9" width="8.400" height="6.500" fill="#3fa7d6"/><path d="M2.300 15.500V13.500C4.500 11.500 6.500 11.500 10.700 14.500V15.500Z" fill="#5fa84a"/></svg>
<div class="t " style="left:931px;top:77px;letter-spacing:0.224px;">icon.png</div>
<svg style="left:1000px;top:82px" width="10" height="10" viewBox="0 0 10 10" fill="none" stroke="#7b7e85" stroke-width="1.200"><path d="M0.500 0.500L9.500 9.500M9.500 0.500L0.500 9.500"/></svg>
<div class="a" style="left:520px;top:104px;width:79px;height:923px;background:#313335;"></div>
<div class="a" style="left:599px;top:104px;width:678px;height:923px;background:#2b2b2b;"></div>
<div class="a" style="left:598px;top:104px;width:1px;height:923px;background:#5a5a5a;"></div>
<div class="a" style="left:520px;top:99px;width:33px;height:928px;overflow:hidden">
<div class="ln" style="top:0px">73</div>
<div class="ln" style="top:26px">74</div>
<div class="ln" style="top:52px">75</div>
<div class="ln" style="top:78px">76</div>
<div class="ln" style="top:104px">77</div>
<div class="ln" style="top:130px">78</div>
<div class="ln" style="top:156px">79</div>
<div class="ln" style="top:182px">80</div>
<div class="ln" style="top:208px">81</div>
<div class="ln" style="top:234px">82</div>
<div class="ln" style="top:260px">83</div>
<div class="ln" style="top:286px">84</div>
<div class="ln" style="top:312px">85</div>
<div class="ln" style="top:338px">86</div>
<div class="ln" style="top:364px">87</div>
<div class="ln" style="top:390px">88</div>
<div class="ln" style="top:416px">89</div>
<div class="ln" style="top:442px">90</div>
<div class="ln" style="top:468px">91</div>
<div class="ln" style="top:494px">92</div>
<div class="ln" style="top:520px">93</div>
<div class="ln" style="top:546px">94</div>
<div class="ln" style="top:572px">95</div>
<div class="ln" style="top:598px">96</div>
<div class="ln" style="top:624px">97</div>
<div class="ln" style="top:650px">98</div>
<div class="ln" style="top:676px">99</div>
<div class="ln" style="top:702px">100</div>
<div class="ln" style="top:728px">101</div>
<div class="ln" style="top:754px">102</div>
<div class="ln" style="top:780px">103</div>
<div class="ln" style="top:806px">104</div>
<div class="ln" style="top:832px">105</div>
<div class="ln" style="top:858px">106</div>
<div class="ln" style="top:884px">107</div>
<div class="ln" style="top:910px">108</div>
</div>
<svg style="left:593px;top:185px" width="11" height="14" viewBox="0 0 11 14"><path d="M0.500 0.500H10.500V8L5.500 13L0.500 8Z" fill="#2b2b2b" stroke="#5e5e5e"/><rect x="3" y="4" width="5" height="1" fill="#7a7a7a"/></svg>
<svg style="left:593px;top:237px" width="11" height="14" viewBox="0 0 11 14"><path d="M0.500 0.500H10.500V8L5.500 13L0.500 8Z" fill="#2b2b2b" stroke="#5e5e5e"/><rect x="3" y="4" width="5" height="1" fill="#7a7a7a"/></svg>
<svg style="left:593px;top:286px" width="11" height="14" viewBox="0 0 11 14"><path d="M0.500 13.500H10.500V5.500L5.500 0.500L0.500 5.500Z" fill="#2b2b2b" stroke="#5e5e5e"/><rect x="3" y="8.500" width="5" height="1" fill="#7a7a7a"/></svg>
<svg style="left:593px;top:312px" width="11" height="14" viewBox="0 0 11 14"><path d="M0.500 13.500H10.500V5.500L5.500 0.500L0.500 5.500Z" fill="#2b2b2b" stroke="#5e5e5e"/><rect x="3" y="8.500" width="5" height="1" fill="#7a7a7a"/></svg>
<svg style="left:593px;top:393px" width="11" height="14" viewBox="0 0 11 14"><path d="M0.500 0.500H10.500V8L5.500 13L0.500 8Z" fill="#2b2b2b" stroke="#5e5e5e"/><rect x="3" y="4" width="5" height="1" fill="#7a7a7a"/></svg>
<svg style="left:593px;top:445px" width="11" height="14" viewBox="0 0 11 14"><path d="M0.500 0.500H10.500V8L5.500 13L0.500 8Z" fill="#2b2b2b" stroke="#5e5e5e"/><rect x="3" y="4" width="5" height="1" fill="#7a7a7a"/></svg>
<svg style="left:593px;top:523px" width="11" height="14" viewBox="0 0 11 14"><path d="M0.500 0.500H10.500V8L5.500 13L0.500 8Z" fill="#2b2b2b" stroke="#5e5e5e"/><rect x="3" y="4" width="5" height="1" fill="#7a7a7a"/></svg>
<svg style="left:593px;top:598px" width="11" height="14" viewBox="0 0 11 14"><path d="M0.500 13.500H10.500V5.500L5.500 0.500L0.500 5.500Z" fill="#2b2b2b" stroke="#5e5e5e"/><rect x="3" y="8.500" width="5" height="1" fill="#7a7a7a"/></svg>
<svg style="left:593px;top:627px" width="11" height="14" viewBox="0 0 11 14"><path d="M0.500 0.500H10.500V8L5.500 13L0.500 8Z" fill="#2b2b2b" stroke="#5e5e5e"/><rect x="3" y="4" width="5" height="1" fill="#7a7a7a"/></svg>
<svg style="left:593px;top:653px" width="11" height="14" viewBox="0 0 11 14"><path d="M0.500 0.500H10.500V8L5.500 13L0.500 8Z" fill="#2b2b2b" stroke="#5e5e5e"/><rect x="3" y="4" width="5" height="1" fill="#7a7a7a"/></svg>
<svg style="left:593px;top:702px" width="11" height="14" viewBox="0 0 11 14"><path d="M0.500 13.500H10.500V5.500L5.500 0.500L0.500 5.500Z" fill="#2b2b2b" stroke="#5e5e5e"/><rect x="3" y="8.500" width="5" height="1" fill="#7a7a7a"/></svg>
<svg style="left:593px;top:754px" width="11" height="14" viewBox="0 0 11 14"><path d="M0.500 13.500H10.500V5.500L5.500 0.500L0.500 5.500Z" fill="#2b2b2b" stroke="#5e5e5e"/><rect x="3" y="8.500" width="5" height="1" fill="#7a7a7a"/></svg>
<svg style="left:593px;top:783px" width="11" height="14" viewBox="0 0 11 14"><path d="M0.500 0.500H10.500V8L5.500 13L0.500 8Z" fill="#2b2b2b" stroke="#5e5e5e"/><rect x="3" y="4" width="5" height="1" fill="#7a7a7a"/></svg>
<svg style="left:593px;top:832px" width="11" height="14" viewBox="0 0 11 14"><path d="M0.500 13.500H10.500V5.500L5.500 0.500L0.500 5.500Z" fill="#2b2b2b" stroke="#5e5e5e"/><rect x="3" y="8.500" width="5" height="1" fill="#7a7a7a"/></svg>
<svg style="left:593px;top:858px" width="11" height="14" viewBox="0 0 11 14"><path d="M0.500 13.500H10.500V5.500L5.500 0.500L0.500 5.500Z" fill="#2b2b2b" stroke="#5e5e5e"/><rect x="3" y="8.500" width="5" height="1" fill="#7a7a7a"/></svg>
<svg style="left:593px;top:936px" width="11" height="14" viewBox="0 0 11 14"><path d="M0.500 13.500H10.500V5.500L5.500 0.500L0.500 5.500Z" fill="#2b2b2b" stroke="#5e5e5e"/><rect x="3" y="8.500" width="5" height="1" fill="#7a7a7a"/></svg>
<div class="a" style="left:605px;top:99.400px;width:672px;height:927.600px;overflow:hidden">
<div class="code" style="top:52px"><span class="c" style="margin-left:-4px">/<span style="font-size:16px;letter-spacing:0">点击事件</span></span></div>
<div class="code" style="top:78px">tClickedListener((component) -&gt; {</div>
<div class="code" style="top:104px">.getText()!=<span class="k">null</span> &amp;&amp; !<span class="f">text</span>.getText().trim().equals(<span class="s">""</span>))</div>
<div class="code" style="top:156px"><span class="f">text</span>.setText(<span class="f">text</span>.getText().substring(<span class="n">0</span><span class="k">,</span><span class="f">text</span>.length()-<span class="n">1</span>))<span class="k">;</span></div>
<div class="code" style="top:286px">ickedListener((component) -&gt; {</div>
<div class="code" style="top:312px">arget = <span class="f">text</span>.getText()<span class="k">;</span></div>
<div class="code" style="top:338px"><span class="f">ators</span>.contains(<span class="f">text</span>.getText().substring(<span class="f">text</span>.length()-<span class="n">1</span>))) {</div>
<div class="code" style="top:364px">ToastDialog(getContext()).setAutoClosable(<span class="k">true</span>).setSize(<span class="hint" style="width:55px;margin-left:1.800px;margin-right:1.400px">width:</span><span class="n">800</span><span class="k">,</span><span class="hint" style="margin-left:2.600px;width:40px">height:</span></div>
<div class="code" style="top:390px"><span class="k">rn;</span></div>
<div class="code" style="top:416px"><span class="k">f</span> (target.contains(<span class="s">"<span style="font-size:15.800px;letter-spacing:0">错误</span>"</span>)) {</div>
<div class="code" style="top:442px">ToastDialog(getContext()).setAutoClosable(<span class="k">true</span>).setSize(<span class="hint" style="width:55px;margin-left:1.800px;margin-right:1.400px">width:</span><span class="n">800</span><span class="k">,</span><span class="hint" style="margin-left:2.600px;width:40px">height:</span></div>
<div class="code" style="top:468px"><span class="k">rn;</span></div>
<div class="code" style="top:546px">(Calculate.<span class="i">cacl</span>(Calculate.<span class="i">analyze</span>(target)) + <span class="s">""</span>).equals(<span class="s">"Infinity"</span>))</div>
<div class="code" style="top:572px"><span class="k">new</span> ToastDialog(getContext()).setAutoClosable(<span class="k">true</span>).setSize(<span class="hint" style="width:55px;margin-left:1.800px;margin-right:1.400px">width:</span><span class="n">800</span></div>
<div class="code" style="top:598px"><span class="k">se</span> {</div>
<div class="code" style="top:624px"><span class="f">text</span>.setText(Calculate.<span class="i">cacl</span>(Calculate.<span class="i">analyze</span>(target))+ <span class="s">""</span>)<span class="k">;</span></div>
<div class="code" style="top:676px">(Exception e) {</div>
<div class="code" style="top:702px">intStackTrace()<span class="k">;</span></div>
</div>
<svg style="left:1251px;top:114px" width="16" height="13" viewBox="0 0 16 13" fill="none" stroke="#499c54" stroke-width="3"><path d="M1.500 5.500L6 10L14.500 1.500"/></svg>
<div class="a" style="left:1259px;top:179px;width:18px;height:3px;background:#0a6b16;"></div>
<div class="a" style="left:1265px;top:648px;width:12px;height:281px;background:rgba(140,140,140,0.35);"></div>
<div class="a" style="left:689px;top:1014px;width:270px;height:11px;background:rgba(140,140,140,0.35);"></div>
<div class="a" style="left:1277px;top:70px;width:2px;height:957px;background:#474c58;"></div>
<div class="t " style="left:1285px;top:77px;letter-spacing:-0.142px;">Remote Device</div>
<div class="a" style="left:1788px;top:78px;width:18px;height:18px;background:#e84245;border-radius:1px"></div>
<div class="a" style="left:1818px;top:76px;width:1px;height:22px;background:#50545c;"></div>
<svg style="left:1832.7px;top:78.7px" width="16.600" height="16.600" viewBox="-9 -9 18 18"><g fill="#afb1b3"><path d="M-2.400 -8.800H2.400L3 -4H-3Z" transform="rotate(0)"/><path d="M-2.400 -8.800H2.400L3 -4H-3Z" transform="rotate(60)"/><path d="M-2.400 -8.800H2.400L3 -4H-3Z" transform="rotate(120)"/><path d="M-2.400 -8.800H2.400L3 -4H-3Z" transform="rotate(180)"/><path d="M-2.400 -8.800H2.400L3 -4H-3Z" transform="rotate(240)"/><path d="M-2.400 -8.800H2.400L3 -4H-3Z" transform="rotate(300)"/><circle r="6.400"/></g><circle r="2.800" fill="#32363f"/></svg>
<div class="a" style="left:1867px;top:86px;width:16px;height:2.5px;background:#afb1b3;"></div>
<div class="a" style="left:1279px;top:103px;width:613px;height:1px;background:#474c58;"></div>
<div class="a" style="left:1892px;top:70px;width:1px;height:957px;background:#2d2f34;"></div>
<div class="a" style="left:1892px;top:153px;width:28px;height:145px;background:#484c55;"></div>
<div class="t" style="left:1907px;top:100px;transform-origin:0 0;transform:rotate(90deg) translate(0,-10px);font-size:14px;letter-spacing:-0.337px;">Gradle</div>
<div class="t" style="left:1907px;top:192px;transform-origin:0 0;transform:rotate(90deg) translate(0,-10px);font-size:14px;letter-spacing:-0.362px;">Remote Device</div>
<svg style="left:1898px;top:79px" width="17" height="13.400" viewBox="0 -0.300 19 15"><path d="M0.200 14.300V9.500C0.200 6 2.500 2.800 6 2.600C8.500 2.400 11 2.800 13.300 4.400C14.800 4.900 16.200 4.200 16.600 2.900C16.900 1.900 16 1.300 15.200 1.700C14.600 2 14.300 2.300 13.800 2C13.300 1.500 14 0.300 15.500 0.100C17.300 -0.100 18.600 1.200 18.700 3C18.800 5 17.600 6.800 15.600 8C14.600 9 13.600 10.500 13.300 14.300H10.600V13.200C10.600 12.200 9.900 11.900 9.200 11.900C8.500 11.900 7.800 12.200 7.800 13.200V14.300H5.200V13.200C5.200 12.200 4.500 11.900 3.800 11.900C3.100 11.900 2.400 12.200 2.400 13.200V14.300Z" fill="#9ea4aa"/></svg>
<svg style="left:1896px;top:166px" width="22" height="20" viewBox="0 0 22 20" fill="none" stroke="#b9bbbe" stroke-width="1.500"><circle cx="11" cy="11" r="8"/><circle cx="11" cy="11" r="3.200"/><circle cx="11" cy="2.500" r="1.800" fill="#b9bbbe" stroke="none"/><circle cx="3" cy="15.500" r="1.800" fill="#b9bbbe" stroke="none"/><circle cx="19" cy="15.500" r="1.800" fill="#b9bbbe" stroke="none"/></svg>
<div class="t b" style="left:1485px;width:200px;text-align:center;top:109px;height:30px;line-height:30px;font-size:26.500px;letter-spacing:-0.600px;color:#fff">P40</div>
<svg style="left:1541px;top:143px" width="22" height="22" viewBox="0 0 22 22" fill="none" stroke="#b4b7bb" stroke-width="1.500"><path d="M7.500 3.200A8.500 8.500 0 1 0 11 2.500"/><path d="M11 0.500V4.500M6.500 6.500L11 11.500" stroke-width="1.700"/></svg>
<div class="t " style="left:1566px;top:145px;font-size:17px;letter-spacing:-0.484px;">00:49:44</div>
<div class="a" style="left:1391px;top:176px;width:384px;height:808px;border-radius:47px 47px 52px 52px;background:linear-gradient(180deg,#a8927f 0,#7d6e63 5%,#6f6057 94%,#8a6f5c 100%)"></div>
<div class="a" style="left:1392px;top:177px;width:382px;height:806px;border-radius:46px 46px 51px 51px;background:linear-gradient(180deg,#6e6a67 0,#6a6664 90%,#3c3c3c 97%)"></div>
<div class="a" style="left:1393.2px;top:177.8px;width:379.6px;height:804.7px;border-radius:45px 45px 50px 50px;background:linear-gradient(180deg,#b4b1ae 0,#bdbdbd 6%,#bdbdbd 88%,#4a4a4a 96%)"></div>
<div class="a" style="left:1396px;top:179.5px;width:374px;height:801.5px;border-radius:43px 43px 48px 48px;background:linear-gradient(180deg,#7c7c7c 0,#808080 88%,#3a3a3a 95%)"></div>
<div class="a" style="left:1397.5px;top:180.5px;width:371.0px;height:801.0px;border-radius:42px 42px 47px 47px;background:linear-gradient(180deg,#3a3a3a 0,#404040 88%,#2a2a2a 94%,#4e4e4e 99%)"></div>
<div class="a" style="left:1399.5px;top:182.5px;width:367.0px;height:789.5px;border-radius:40px 40px 46px 46px/40px 40px 36px 36px;background:linear-gradient(180deg,#000 0,#000 98.600%,#2c2c2c 100%)"></div>
<div class="a" style="left:1505px;top:176px;width:7px;height:2px;background:#c9a98f;"></div>
<div class="a" style="left:1656px;top:176px;width:7px;height:2px;background:#c9a98f;"></div>
<div class="a" style="left:1524px;top:982px;width:6px;height:2px;background:#a58670;"></div>
<div class="a" style="left:1636px;top:982px;width:6px;height:2px;background:#a58670;"></div>
<div class="a" style="left:1775px;top:320px;width:3px;height:98px;background:#bfa89a;border-radius:0 2px 2px 0"></div>
<div class="a" style="left:1775px;top:453px;width:3px;height:44px;background:#bfa89a;border-radius:0 2px 2px 0"></div>
<div class="a" style="left:1404px;top:190px;width:359px;height:773px;border-radius:34px 34px 30px 30px/34px 34px 24px 24px;background:#000;overflow:hidden">
<div class="a" style="left:0;top:0;width:359px;height:43px;background:#000"></div>
<div class="a" style="left:0;top:43px;width:359px;height:55px;background:#212121"></div>
<div class="a" style="left:0;top:98px;width:359px;height:636px;background:#fff"></div>
<div class="a" style="left:0;top:734px;width:359px;height:39px;background:#fafafa"></div>
</div>
<div class="a" style="left:1427px;top:212px;width:9px;height:9px;border-radius:50%;background:radial-gradient(circle at 50% 55%,#2a72c4 0,#123a6c 28%,#050c18 55%,#000 80%)"></div>
<div class="a" style="left:1475px;top:207px;width:18px;height:18px;border-radius:50%;background:radial-gradient(circle at 55% 50%,#2a72c4 0,#0f2f5a 22%,#070d18 42%,#03050a 75%)"></div>
<svg style="left:1509px;top:210px" width="48" height="12" viewBox="0 0 48 12"><g fill="#fff"><rect x="1" y="1.500" width="1.500" height="3"/><rect x="3.300" y="1.500" width="1.500" height="3"/><rect x="6" y="9" width="2" height="2.500"/><rect x="9" y="7" width="2" height="4.500"/><rect x="12" y="4.500" width="2" height="7"/><rect x="15" y="1.500" width="2" height="10"/></g><g fill="none" stroke="#fff" stroke-width="1.500"><path d="M21.300 5.300C24.500 2 29.500 2 32.700 5.300"/><path d="M23.500 7.800C25.800 5.600 28.200 5.600 30.500 7.800"/></g><circle cx="27" cy="10.300" r="1.400" fill="#fff"/><rect x="35.800" y="1.500" width="10" height="10" rx="1.500" fill="#fff"/><path d="M40.800 2.800L44 4V7C44 8.800 42.500 9.900 40.800 10.500C39.100 9.900 37.600 8.800 37.600 7V4Z" fill="#2f95f0"/></svg>
<div class="t" style="left:1671px;top:206px;font-size:11.500px;color:#fff">100%</div>
<svg style="left:1703px;top:210.500px" width="20" height="11" viewBox="0 0 20 11"><rect x="0.700" y="0.700" width="16.600" height="9.600" rx="1.800" fill="none" stroke="#fff" stroke-width="1.200"/><rect x="2.300" y="2.300" width="13.400" height="6.400" rx="0.600" fill="#9c9c9c"/><rect x="18" y="3" width="1.700" height="5" rx="0.600" fill="#fff"/><path d="M5.500 5.500L9.800 3.600V5H12.500L8.200 7.400V6H5.500Z" fill="#fff"/></svg>
<div class="t" style="left:1727px;top:206px;font-size:11.500px;color:#fff">1:01</div>
<div class="t" style="left:1419px;top:247px;height:30px;line-height:30px;font-size:21px;color:#ececec">Calculator</div>
<div class="t" style="left:1504px;top:305px;height:30px;line-height:30px;font-size:20.500px;letter-spacing:0.5px;color:#000">1+9-2*8/3</div>
<div class="a" style="left:1494px;top:358px;width:60px;height:60px;border-radius:50%;background:#0000ff;color:#000;font-size:32px;line-height:64px;text-align:center;">1</div>
<div class="a" style="left:1556.6px;top:358px;width:60px;height:60px;border-radius:50%;background:#0000ff;color:#000;font-size:32px;line-height:64px;text-align:center;">2</div>
<div class="a" style="left:1619px;top:358px;width:60px;height:60px;border-radius:50%;background:#0000ff;color:#000;font-size:32px;line-height:64px;text-align:center;">3</div>
<div class="a" style="left:1494px;top:437.3px;width:60px;height:60px;border-radius:50%;background:#0000ff;color:#000;font-size:32px;line-height:64px;text-align:center;">4</div>
<div class="a" style="left:1556.6px;top:437.3px;width:60px;height:60px;border-radius:50%;background:#0000ff;color:#000;font-size:32px;line-height:64px;text-align:center;">5</div>
<div class="a" style="left:1619px;top:437.3px;width:60px;height:60px;border-radius:50%;background:#0000ff;color:#000;font-size:32px;line-height:64px;text-align:center;">6</div>
<div class="a" style="left:1494px;top:517px;width:60px;height:60px;border-radius:50%;background:#0000ff;color:#000;font-size:32px;line-height:64px;text-align:center;">7</div>
<div class="a" style="left:1556.6px;top:517px;width:60px;height:60px;border-radius:50%;background:#0000ff;color:#000;font-size:32px;line-height:64px;text-align:center;">8</div>
<div class="a" style="left:1619px;top:517px;width:60px;height:60px;border-radius:50%;background:#0000ff;color:#000;font-size:32px;line-height:64px;text-align:center;">9</div>
<div class="a" style="left:1494px;top:596.7px;width:60px;height:60px;border-radius:50%;background:#0000ff;color:#000;font-size:32px;line-height:64px;text-align:center;">+</div>
<div class="a" style="left:1556.6px;top:596.7px;width:60px;height:60px;border-radius:50%;background:#0000ff;color:#000;font-size:32px;line-height:64px;text-align:center;"><span style="display:inline-block;transform:translateY(1px)">-</span></div>
<div class="a" style="left:1619px;top:596.7px;width:60px;height:60px;border-radius:50%;background:#0000ff;color:#000;font-size:32px;line-height:64px;text-align:center;">0</div>
<div class="a" style="left:1494px;top:676px;width:60px;height:60px;border-radius:50%;background:#0000ff;color:#000;font-size:32px;line-height:64px;text-align:center;padding-top:1px;">*</div>
<div class="a" style="left:1556.6px;top:676px;width:60px;height:60px;border-radius:50%;background:#0000ff;color:#000;font-size:32px;line-height:64px;text-align:center;">/</div>
<div class="a" style="left:1619px;top:676px;width:60px;height:60px;border-radius:50%;background:#0000ff;color:#000;font-size:32px;line-height:64px;text-align:center;"><span style="display:inline-block;transform:translateY(-6px) scale(1.400,1.150)">←</span></div>
<div class="a" style="left:1493.300px;top:746px;width:181px;height:60px;border-radius:30px;background:#0000ff;color:#000;font-size:29px;line-height:65px;text-align:center;letter-spacing:1px;padding-left:3px;font-family:'Liberation Sans','Noto Sans CJK SC',sans-serif">计算</div>
<div class="t" style="left:1468px;top:844px;height:30px;line-height:30px;font-size:21px;color:#ff2412;font-family:'Liberation Serif','Noto Serif CJK SC',serif">正确输入</div>
<svg style="left:1498px;top:937px" width="16" height="17" viewBox="0 0 16 17" fill="none" stroke="#5a5a5a" stroke-width="1.300"><path d="M14 1.200V15.800L1.500 8.500Z"/></svg>
<svg style="left:1575px;top:936px" width="18" height="18" viewBox="0 0 18 18" fill="none" stroke="#5a5a5a" stroke-width="1.300"><circle cx="9" cy="9" r="7.600"/></svg>
<svg style="left:1653px;top:937px" width="16" height="16" viewBox="0 0 16 16" fill="none" stroke="#5a5a5a" stroke-width="1.300"><rect x="1" y="1" width="14" height="14" rx="1"/></svg>
<svg style="left:1521px;top:997px" width="22" height="22" viewBox="0 0 22 22" fill="none" stroke="#e4e5e7" stroke-width="1.700"><path d="M2 13V2H17V17"/><rect x="2" y="9.500" width="10" height="10"/><path d="M13.500 18.500H20.500L17 22Z" fill="#e4e5e7" stroke="none"/></svg>
<svg style="left:1555px;top:997px" width="22" height="22" viewBox="0 0 22 22" fill="none" stroke="#e4e5e7" stroke-width="1.700"><rect x="5.500" y="4" width="10" height="15" rx="1.500" transform="rotate(40 10.500 11.500)"/><path d="M3 10C2.500 6 4.500 3.500 8 2.500" stroke-width="1.400"/><path d="M6.500 0.500L9.500 2.500L7 5Z" fill="#e4e5e7" stroke="none"/></svg>
<svg style="left:1590px;top:998px" width="20" height="20" viewBox="0 0 20 20" fill="none" stroke="#e4e5e7" stroke-width="1.700"><path d="M17 1.500V18.500L2 10Z"/></svg>
<svg style="left:1623px;top:997px" width="22" height="22" viewBox="0 0 22 22" fill="none" stroke="#e4e5e7" stroke-width="1.700"><circle cx="11" cy="11" r="9.500"/></svg>
<div class="a" style="left:0px;top:1026px;width:1920px;height:1px;background:#2d2f33;"></div>
<svg style="left:39px;top:1033px" width="11" height="14" viewBox="0 0 11 14"><path d="M0.500 0.500L10.500 7L0.500 13.500Z" fill="#afb1b3"/></svg>
<div class="t " style="left:58px;top:1030px;"><u class="m">4</u>:</div>
<div class="t " style="left:73px;top:1030px;letter-spacing:-1.339px;">Run</div>
<svg style="left:119px;top:1031px" width="18" height="18" viewBox="0 0 18 18" fill="#afb1b3"><path d="M1 5.500L6.500 1L10 3.500L8 6L16.500 14.500L14.500 16.500L6 8L4 10Z"/></svg>
<div class="t " style="left:140px;top:1030px;letter-spacing:-0.671px;">Build</div>
<svg style="left:193px;top:1032px" width="18" height="15" viewBox="0 0 18 15" fill="none" stroke="#afb1b3" stroke-width="2.300"><path d="M2 14.500A7.200 7.200 0 0 1 13.500 6.200"/><path d="M15.300 9.500A7.200 7.200 0 0 1 16.200 14.500" stroke-width="2"/><path d="M8.200 14.500L12.800 7.300L11 14.500Z" fill="#afb1b3" stroke="none"/></svg>
<div class="t " style="left:214px;top:1030px;letter-spacing:-0.439px;">Profiler</div>
<div class="a" style="left:1800px;top:1032px;width:16px;height:16px;border-radius:8px 8px 1px 8px;background:#c75450;color:#fff;font-size:11px;line-height:16px;text-align:center;font-weight:bold">1</div>
<div class="t " style="left:1820px;top:1030px;word-spacing:-2.0px;letter-spacing:-0.539px;">Event Log</div>
<div class="a" style="left:0px;top:1053px;width:1920px;height:1px;background:#4a4844;"></div>
<svg style="left:7px;top:1057px" width="17" height="17" viewBox="0 0 17 17" fill="none" stroke="#afb1b3" stroke-width="1.300"><rect x="4" y="1" width="12" height="12"/><path d="M4 4H1V16H13V13"/></svg>
<div class="t " style="left:33px;top:1056px;letter-spacing:-0.056px;">Gradle sync finished in 1 m 16 s 211 ms (9 minutes ago)</div>
<div class="t " style="left:1842.7px;top:1056px;letter-spacing:-0.707px;">15:14</div>
<div class="a" style="left:1892px;top:1058px;width:16px;height:16px;border-radius:50%;background:#c75450;color:#2b2b2b;font-size:13px;line-height:16px;text-align:center;font-weight:bold">!</div>
<div class="a" style="left:0px;top:1078px;width:1920px;height:2px;background:#202226;"></div>
<div class="a" style="left:149px;top:1078px;width:160px;height:2px;background:#4a4c50;"></div>
</body></html>
